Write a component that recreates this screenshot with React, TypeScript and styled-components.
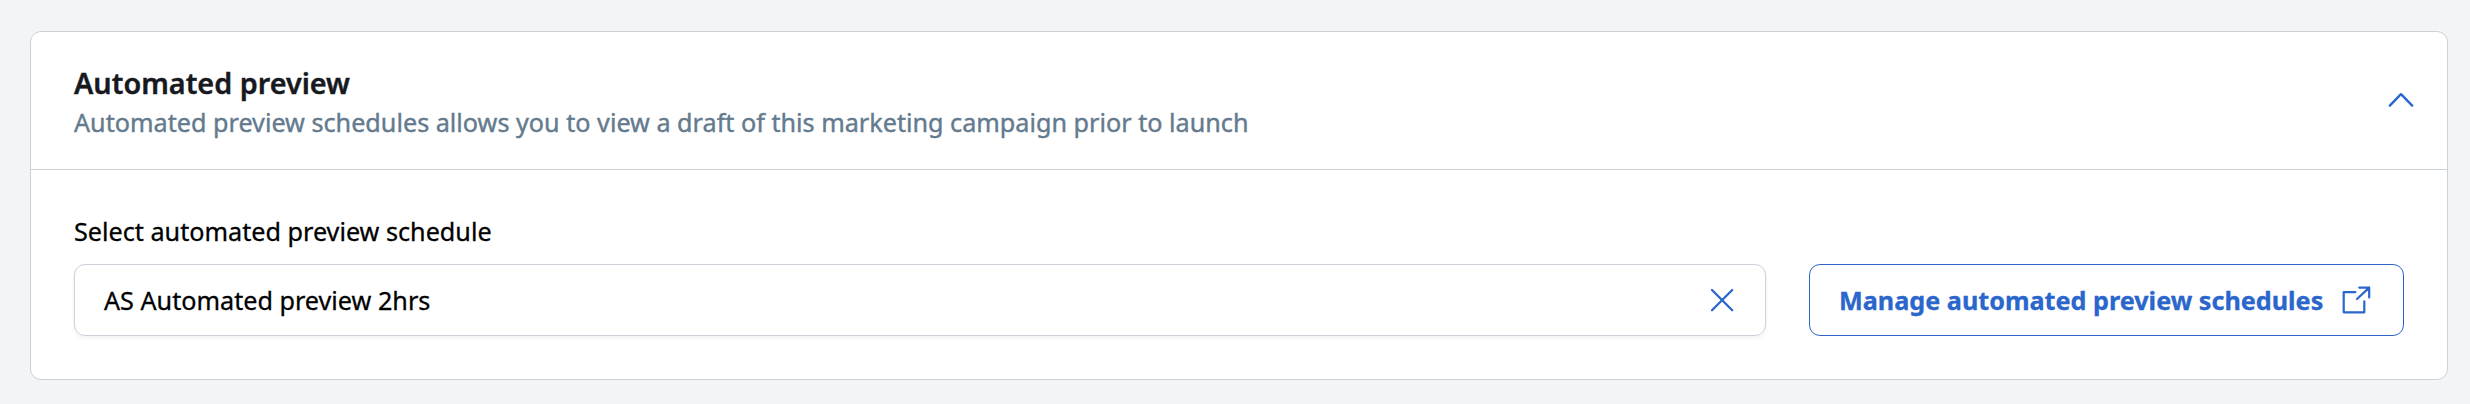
import React from 'react';
import styled, { createGlobalStyle } from 'styled-components';

const Global = createGlobalStyle`
  * { box-sizing: border-box; }
  body { margin: 0; background: #f3f4f6; font-family: "Noto Sans", sans-serif; }
`;
const Page = styled.main`
  height: 404px;
  padding: 31px 22px 24px 30px;
`;
const Card = styled.section`
  height: 349px;
  border: 1px solid #cbd2d9;
  border-radius: 11px;
  background: #fff;
`;
const Header = styled.header`
  display: flex;
  align-items: flex-start;
  justify-content: space-between;
  height: 138px;
  padding: 31px 33px 0 43px;
  border-bottom: 1px solid #cbd2d9;
`;
const Title = styled.h2`
  margin: 0;
  font-size: 28.8px;
  line-height: 39px;
  font-weight: 600;
  color: #17191f;
  -webkit-text-stroke: 0.4px currentColor;
`;
const Subtitle = styled.p`
  margin: 1px 0 0;
  font-size: 25.2px;
  line-height: 38px;
  color: #647a8e;
  -webkit-text-stroke: 0.4px currentColor;
`;
const Chevron = styled.svg`
  margin-top: 29px;
`;
const Body = styled.div`
  padding: 41px 43px 0;
`;
const Label = styled.label`
  display: block;
  font-size: 25.2px;
  line-height: 40px;
  color: #000;
  -webkit-text-stroke: 0.3px currentColor;
`;
const Row = styled.div`
  display: flex;
  gap: 43px;
  margin-top: 13px;
`;
const Field = styled.div`
  flex: 1;
  display: flex;
  align-items: center;
  justify-content: space-between;
  height: 72px;
  padding: 0 31px 0 29px;
  border: 1px solid #cbd2d9;
  border-radius: 11px;
  box-shadow: 0 2px 4px rgba(0, 0, 0, 0.06);
  font-size: 25.2px;
  -webkit-text-stroke: 0.3px currentColor;
`;
const Button = styled.button`
  display: flex;
  align-items: center;
  justify-content: space-between;
  width: 595px;
  height: 72px;
  padding: 0 32px 0 29px;
  border: 1px solid #2a66cc;
  border-radius: 11px;
  background: #fff;
  color: #2a66cc;
  font: 700 25.2px "Noto Sans", sans-serif;
  -webkit-text-stroke: 0.3px currentColor;
`;

export default function App() {
  return (
    <Page>
      <Global />
      <Card>
        <Header>
          <div>
            <Title>Automated preview</Title>
            <Subtitle>Automated preview schedules allows you to view a draft of this marketing campaign prior to launch</Subtitle>
          </div>
          <Chevron width="26" height="16" viewBox="0 0 26 16" fill="none" stroke="#2a66cc" strokeWidth="2.4" strokeLinecap="round" strokeLinejoin="round"><path d="M1.8 13.6 13 2.2l11.2 11.4" /></Chevron>
        </Header>
        <Body>
          <Label>Select automated preview schedule</Label>
          <Row>
            <Field>
              AS Automated preview 2hrs
              <svg width="24" height="24" viewBox="0 0 24 24" fill="none" stroke="#2a66cc" strokeWidth="2.3" strokeLinecap="round"><path d="M2 2l20.2 20.2M22.2 2 2 22.2" /></svg>
            </Field>
            <Button>
              Manage automated preview schedules
              <svg width="30" height="30" viewBox="0 0 30 30" fill="none" stroke="#2a66cc" strokeWidth="2.2" strokeLinecap="round" strokeLinejoin="round"><path d="M14.3 7.2H2.7v20.1h20.6V16.4M18.2 2.6h10v9.8M28.2 2.6 16 14" /></svg>
            </Button>
          </Row>
        </Body>
      </Card>
    </Page>
  );
}
